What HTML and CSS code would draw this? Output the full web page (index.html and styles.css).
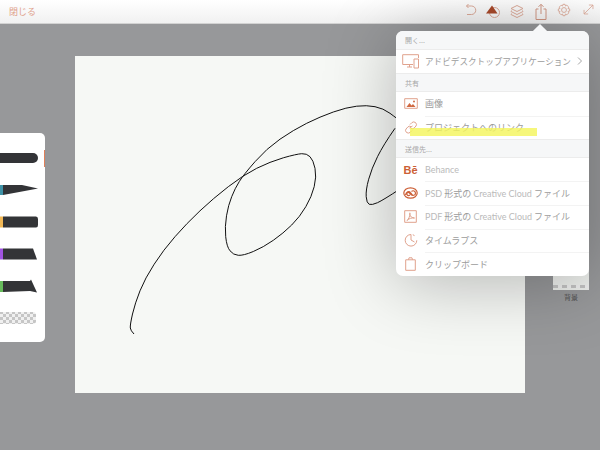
FILE: index.html
```html
<!DOCTYPE html>
<html lang="ja">
<head>
    <meta charset="UTF-8">
    <title>書き出し</title>
    <link rel="stylesheet" href="styles.css">
</head>
<body>
    <!-- Top toolbar -->
    <header class="topbar">
        <span class="close">閉じる</span>
        <nav class="tools">
            <span class="tool-btn">
                <svg width="14" height="14" viewBox="0 0 14 14"><path d="M3.500 3H8.500A3.400 3.400 0 0 1 8.500 11.500H4M3.500 3L5.500 1M3.500 3L5.500 5"/></svg>
            </span>
            <span class="tool-btn">
                <svg width="16" height="16" viewBox="0 0 16 16"><circle cx="9.500" cy="9.500" r="5"/><path class="solid" d="M7 2.500L12.500 10.500H1Z"/></svg>
            </span>
            <span class="tool-btn">
                <svg width="16" height="16" viewBox="0 0 16 16"><path d="M8 2.500L14 5.500L8 8.500L2 5.500ZM2.500 7.500L2 8.500L8 11.500L14 8.500L13.500 7.500M2.500 10.500L2 11.500L8 14.500L14 11.500L13.500 10.500"/></svg>
            </span>
            <span class="tool-btn">
                <svg width="16" height="18" viewBox="0 0 16 18"><path class="dark" d="M5.500 6H3V16.500H13V6H10.500M8 11V1.500M5.500 3.800L8 1.300L10.500 3.800"/></svg>
            </span>
            <span class="tool-btn">
                <svg width="14" height="14" viewBox="0 0 16 16"><circle cx="8" cy="8" r="2.800"/><path d="M6.800 1.500H9.200L9.700 3.400L11.300 2.500L13.500 4.700L12.600 6.300L14.500 6.800V9.200L12.600 9.700L13.500 11.300L11.300 13.500L9.700 12.600L9.200 14.500H6.800L6.300 12.600L4.700 13.500L2.500 11.300L3.400 9.700L1.500 9.200V6.800L3.400 6.300L2.500 4.700L4.700 2.500L6.300 3.400Z"/></svg>
            </span>
            <span class="tool-btn">
                <svg width="13" height="13" viewBox="0 0 16 16"><path d="M2.500 13.500L13.500 2.500M8.500 2.500H13.500V7.500M2.500 8.500V13.500H7.500"/></svg>
            </span>
        </nav>
    </header>

    <main class="stage">
        <div class="canvas">
            <svg class="drawing" viewBox="75 56 450 337">
                <path d="M134 334Q130.700 330.700 130.300 328Q130 325 132.500 314Q135 303.300 140 290.800Q145 278.300 154.200 264.200Q163.300 250 175 236.700Q186.700 223.300 200 210.800Q213.300 198.300 228.300 186.700Q243.300 175 256.700 168.300Q270 161.700 283.300 157.800Q296.700 154 301.700 153.700Q306.700 153.300 310 156.700Q313.300 160 315 168.300Q316.700 176.700 314.200 186.700Q311.700 196.700 305.800 206.700Q300 216.700 291.700 225Q283.300 233.300 273.300 240.300Q263.300 247.300 253.300 251.500Q243.300 255.700 238.300 255.300Q233.300 255 230 250.800Q226.700 246.700 225.700 236.700Q224.700 226.700 226.500 215.800Q228.300 205 231.700 196.700Q235 188.300 239.200 181.700Q243.300 175 255 161.700Q266.700 148.300 280 139.200Q293.300 130 306.700 123.300Q320 116.700 333.300 112Q346.700 107.300 356.700 106.200Q366.700 105 375 106.700Q383.300 108.300 390 113.300Q396.700 118.300 410 128"/>
                <path d="M395 128.300Q383.300 145 377.500 156.700Q371.700 168.300 368.700 179.200Q365.700 190 366.200 196.700Q366.700 203.300 369.200 204.300Q371.700 205.300 377.500 202.700Q383.300 200 400 189"/>
            </svg>
        </div>
    </main>

    <!-- Brush palette -->
    <aside class="palette">
        <svg class="brush" width="40" height="14" viewBox="0 0 40 14"><path d="M0 2H33A5 5 0 0 1 33 12H0Z"/></svg>
        <svg class="brush" width="40" height="14" viewBox="0 0 40 14"><rect class="collar teal" y="2" width="3" height="10"/><path d="M3 2H22L38 5.500L22 8.500L3 12Z"/></svg>
        <svg class="brush" width="40" height="14" viewBox="0 0 40 14"><rect class="collar yellow" y="1.500" width="3" height="11"/><path d="M3 1.500H36Q38 1.500 38 4V10Q38 12.500 36 12.500H3Z"/></svg>
        <svg class="brush" width="40" height="14" viewBox="0 0 40 14"><rect class="collar purple" y="1.500" width="3" height="11"/><path d="M3 1.500H33L37 12.500H3Z"/></svg>
        <svg class="brush" width="40" height="14" viewBox="0 0 40 14"><rect class="collar green" y="2" width="3" height="11"/><path d="M3 2H30L31 .5L37 13.500L30 12L3 13Z"/></svg>
        <svg class="brush" width="40" height="14" viewBox="0 0 40 14">
            <defs>
                <pattern id="check" width="6" height="6" patternUnits="userSpaceOnUse">
                    <rect width="6" height="6" fill="#f0f0f0"/>
                    <rect width="3" height="3" fill="#c6c6c6"/>
                    <rect x="3" y="3" width="3" height="3" fill="#c6c6c6"/>
                </pattern>
            </defs>
            <path class="checker" d="M0 1H33Q36 1 36 4V10Q36 13 33 13H0Z"/>
        </svg>
        <span class="palette-mark"></span>
    </aside>

    <!-- Layer thumbnail, partly under the popover -->
    <div class="layer">
        <div class="layer-thumb"></div>
        <span class="layer-name">背景</span>
    </div>

    <!-- Share popover -->
    <section class="popover">
        <div class="pop-head first">開く...</div>
        <div class="pop-row">
            <span class="pop-icon">
                <svg width="18" height="15" viewBox="0 0 18 15"><path d="M11 10.500H.7V.7H16.500V4M5 13H10M7.500 10.500V13M12 5H16.500V14H12Z"/></svg>
            </span>
            <span class="pop-label tight">アドビデスクトップアプリケーション</span>
            <svg class="chevron" width="6" height="8" viewBox="0 0 6 8"><path d="M1 .5L4.500 4L1 7.500"/></svg>
        </div>

        <div class="pop-head">共有</div>
        <div class="pop-row">
            <span class="pop-icon">
                <svg width="14" height="11" viewBox="0 0 14 11"><path d="M.7 .7H13.300V10.300H.7Z"/><path class="solid" d="M2.500 9L5.500 5L7.500 7.500L9 6L11.500 9Z"/><circle class="solid" cx="10" cy="3.500" r="1"/></svg>
            </span>
            <span class="pop-label">画像</span>
        </div>
        <div class="pop-row">
            <span class="pop-icon">
                <svg width="14" height="13" viewBox="0 0 14 13"><path d="M5.500 7L8.500 5M6 3.500L8 1.500Q9.500 .3 11.500 1.500Q13.300 3.500 12 5L10 7.200Q8.500 8.300 7 7.300M8 9.500L6 11.500Q4.500 12.700 2.500 11.500Q.7 9.500 2 8L4 5.800Q5.500 4.700 7 5.700"/></svg>
            </span>
            <span class="pop-label">プロジェクトへのリンク</span>
            <span class="marker"></span>
        </div>

        <div class="pop-head">送信先...</div>
        <div class="pop-row">
            <span class="pop-icon"><span class="behance">Bē</span></span>
            <span class="pop-label latin">Behance</span>
        </div>
        <div class="pop-row">
            <span class="pop-icon">
                <svg width="15" height="12" viewBox="0 0 15 12"><ellipse class="thick" cx="7.500" cy="6" rx="6.700" ry="5.200"/><path class="thick" d="M2.500 8C3 5 6 3.500 7.500 5.500L9.500 8M8.500 4.500C10 3 12.500 4 12.500 6.200C12.500 8.500 9.500 9 8 7.500L6.500 6C5 4.500 3.500 6 4 7.500C4.500 9 6 8.800 7 8"/></svg>
            </span>
            <span class="pop-label"><span class="latin">PSD</span> 形式の <span class="latin">Creative Cloud</span> ファイル</span>
        </div>
        <div class="pop-row">
            <span class="pop-icon">
                <svg width="13" height="13" viewBox="0 0 13 13"><path d="M.7 .7H12.300V12.300H.7Z"/><path d="M3 10.500C4.500 9.500 6 6 6 3.500C6 2.500 5.500 2.500 5.800 4.500C6.200 6.500 8 8 10.500 8C8 7.500 5 8.500 3 10.500Z"/></svg>
            </span>
            <span class="pop-label"><span class="latin">PDF</span> 形式の <span class="latin">Creative Cloud</span> ファイル</span>
        </div>
        <div class="pop-row">
            <span class="pop-icon">
                <svg width="14" height="14" viewBox="0 0 14 14"><path d="M7 1.500A5.800 5.800 0 1 0 12.800 7.300M7 1.500V7L10.500 9M8.800 1.700L10.500 2.600"/></svg>
            </span>
            <span class="pop-label">タイムラプス</span>
        </div>
        <div class="pop-row">
            <span class="pop-icon">
                <svg width="11" height="14" viewBox="0 0 11 14"><path d="M.7 2.800H10.300V13.300H.7ZM3.500 2.800L4 .8H7L7.500 2.800"/></svg>
            </span>
            <span class="pop-label">クリップボード</span>
        </div>
    </section>
</body>
</html>
```

FILE: styles.css
```css
/* Page */
body {
    width: 600px;
    height: 450px;
    margin: 0;
    overflow: hidden;
    position: relative;
    background-color: #97989a;
    font-family: "Noto Sans CJK JP", "Noto Sans", sans-serif;
}

/* Toolbar */
.topbar {
    height: 24px;
    box-sizing: border-box;
    display: flex;
    justify-content: space-between;
    align-items: center;
    padding-left: 9px;
    background: linear-gradient(#ffffff, #f1f1f1);
    border-bottom: 1px solid #d2d2d2;
}
.close {
    font-size: 9px;
    color: #e0a28c;
}
.tools {
    display: flex;
}
.tool-btn {
    width: 23.7px;
    display: flex;
    justify-content: center;
}
.tool-btn svg path,
.tool-btn svg circle {
    fill: none;
    stroke: #dba998;
    stroke-width: 1;
}
.tool-btn svg path.solid {
    fill: #a8492a;
    stroke: none;
}
.tool-btn svg path.dark {
    stroke: #cf9683;
}

/* Canvas */
.stage {
    padding: 32px 0 0 75px;
}
.canvas {
    width: 450px;
    height: 337px;
    background-color: #f6f8f5;
}
.drawing {
    display: block;
    width: 100%;
    height: 100%;
}
.drawing path {
    fill: none;
    stroke: #111;
    stroke-width: 1;
}

/* Brushes */
.palette {
    position: absolute;
    left: 0;
    top: 133px;
    width: 45px;
    height: 209px;
    box-sizing: border-box;
    padding-top: 18px;
    display: flex;
    flex-direction: column;
    gap: 18px;
    background-color: #fff;
    border-radius: 0 5px 5px 0;
}
.brush {
    display: block;
}
.brush path {
    fill: #333437;
}
.brush path.checker {
    fill: url(#check);
}
.collar.teal { fill: #3f93a8; }
.collar.yellow { fill: #f2b856; }
.collar.purple { fill: #a054e0; }
.collar.green { fill: #67bb5c; }
.palette-mark {
    position: absolute;
    right: 0;
    top: 17px;
    width: 1.5px;
    height: 17px;
    background-color: #e0805a;
}

/* Layer thumbnail */
.layer {
    position: absolute;
    left: 553px;
    top: 240px;
    width: 36px;
    text-align: center;
}
.layer-thumb {
    height: 50px;
    background: repeating-linear-gradient(90deg, #c4c4c4 0 5px, #efefef 5px 9px) 0 45px / 100% 3px no-repeat, #eef0ed;
}
.layer-name {
    display: block;
    margin-top: 2px;
    font-size: 7px;
    line-height: 11px;
    color: #555;
}

/* Popover */
.popover {
    position: absolute;
    left: 396px;
    top: 31px;
    width: 193px;
    border-radius: 7px;
    background-color: #fff;
    box-shadow: 0 6px 70px rgba(0, 0, 0, 0.28);
}
.popover::before {
    content: "";
    position: absolute;
    left: 139px;
    top: -5px;
    width: 10px;
    height: 10px;
    transform: rotate(45deg);
    background-color: #f6f7f8;
}
.pop-head {
    position: relative;
    height: 18.7px;
    box-sizing: border-box;
    padding-left: 9px;
    display: flex;
    align-items: center;
    font-size: 7px;
    color: #a6a6a6;
    background-color: #f6f7f8;
    border-top: 1px solid #ececec;
    border-bottom: 1px solid #ececec;
}
.pop-head.first {
    border-top: 0;
    border-radius: 7px 7px 0 0;
}
.pop-row {
    position: relative;
    height: 23.6px;
    display: flex;
    align-items: center;
    font-size: 9px;
    color: #9c9c9c;
}
.pop-row + .pop-row .pop-label::before {
    content: "";
    position: absolute;
    left: 29px;
    right: 0;
    top: 0;
    border-top: 1px solid #f3f3f3;
}
.pop-icon {
    width: 29px;
    flex: none;
    display: flex;
    justify-content: center;
}
.pop-icon svg path,
.pop-icon svg ellipse {
    fill: none;
    stroke: #e0a28d;
    stroke-width: 1;
}
.pop-icon svg .solid {
    fill: #d06a42;
    stroke: none;
}
.pop-icon svg .thick {
    stroke: #cc5f36;
    stroke-width: 1.2;
}
.pop-label {
    white-space: nowrap;
}
.pop-label.tight {
    font-size: 8.6px;
}
.latin {
    font-family: "Lato", sans-serif;
    font-size: 9px;
    color: #bababa;
}
.behance {
    font-family: "Liberation Sans", sans-serif;
    font-size: 11px;
    font-weight: bold;
    line-height: 12px;
    color: #cc5f36;
}
.chevron {
    margin-left: auto;
    margin-right: 6px;
    fill: none;
    stroke: #a6a6a6;
}
.marker {
    position: absolute;
    left: 14px;
    top: 12px;
    width: 127px;
    height: 8px;
    background-color: rgba(244, 245, 90, 0.8);
}
```
